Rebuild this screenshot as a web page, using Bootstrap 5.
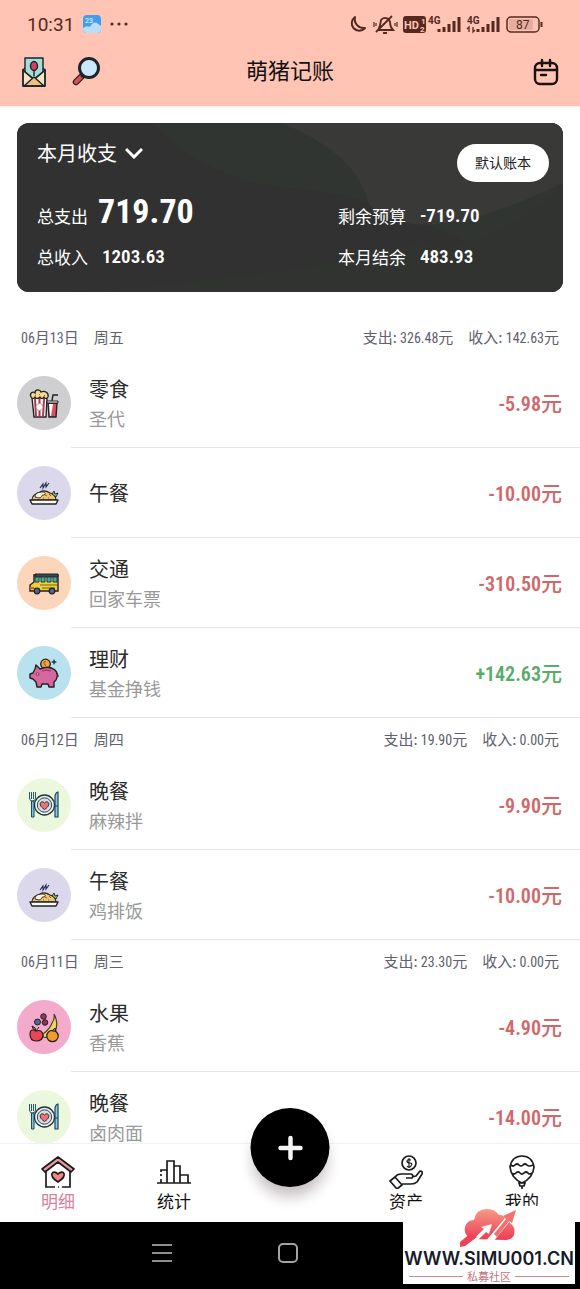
<!DOCTYPE html>
<html lang="zh-CN">
<head>
<meta charset="utf-8">
<meta name="viewport" content="width=device-width, initial-scale=1">
<title>萌猪记账</title>
<link rel="stylesheet" href="https://cdn.jsdelivr.net/npm/bootstrap@5.3.0/dist/css/bootstrap.min.css">
<style>
  body { font-family: "Noto Sans CJK SC", sans-serif; color: #2b2b2b; background: #fff; }
  button, a { color: inherit; }
  .plain-btn { background: none; border: 0; padding: 0; line-height: 1; }
  .num { font-family: "Roboto Condensed", "Noto Sans CJK SC", sans-serif; }
  svg { display: block; flex: none; }

  .top-area { background: #ffc4b3; box-shadow: 0 1px 2px #f3ece9; }
  .status { height: 48px; padding: 0 36px 0 27px; color: #55291f; }
  .status-time { font: 19px Roboto, sans-serif; line-height: 26px; padding-top: 2px; }
  .titlebar { height: 58px; padding: 0 20px; color: #111; }
  .titlebar h1 { font-size: 22px; line-height: 32px; font-weight: 400; padding-bottom: 16px; }
  .titlebar > div { padding-bottom: 10px; }
  .side { flex: 1 1 0; }

  .summary { margin: 17px 17px 24px; padding: 15px 10px 21px 20px; border-radius: 12px; color: #fff; background: #303130; position: relative; overflow: hidden; }
  .summary-bg { position: absolute; inset: 0; width: 100%; height: 100%; }
  .summary-body { position: relative; }
  .period { font-size: 20px; line-height: 30px; }
  .book { width: 92px; height: 38px; margin: 6px 4px 0 0; border: 0; border-radius: 19px; background: #fff; color: #222; font-size: 14px; line-height: 34px; padding-bottom: 3px; }
  .figures { margin-top: 10px; row-gap: 13px; }
  .figure { font-size: 17px; line-height: 28px; gap: 14px; }
  .figure .num { font-weight: 600; font-size: 19px; }
  .figure.total { gap: 10px; }
  .figure.total .num { font-size: 34px; line-height: 38px; font-weight: 700; }

  .day-head { height: 42px; padding: 0 21px; font-size: 15px; color: #60616c; }
  .day-head .num { font-size: 14px; }
  .day-head .gap-day { gap: 15px; }
  .entry { height: 90px; padding-left: 17px; }
  .entry-icon { width: 54px; height: 54px; }
  .entry-body { padding: 0 18px; border-bottom: 1px solid #e6e6e6; }
  .entry-name { font-size: 20px; line-height: 30px; }
  .entry-note { font-size: 18px; line-height: 28px; color: #999; }
  .amount { font-size: 20px; color: #d0686a; font-weight: 600; padding-top: 4px; }
  .amount span { font-size: 21px; font-weight: 500; }
  .amount.income { color: #58ab68; }

  .tabs { background: #fff; border-top: 1px solid #f1f1f1; height: 79px; }
  .tabs a { font-size: 17px; line-height: 24px; color: #111; padding-top: 11px; }
  .tabs a.current { color: #d97f9b; }
  .add { width: 79px; height: 79px; top: -36px; background: #000; border: 0; box-shadow: 0 12px 14px -2px rgba(30,10,20,.25); }
  .sysbar { height: 67px; background: #000; padding: 0 0 5px 26%; gap: 104px; }

  .mark-box { right: 5px; bottom: 5px; width: 172px; height: 78px; background: #fff; }
  .mark-url { font: 600 18px Inter, sans-serif; line-height: 22px; color: #161a2b; }
  .mark-name { font-size: 11px; line-height: 12px; color: #c4727d; gap: 4px; padding: 0 6px; }
  .mark-name i { height: 1px; background: #cf8b92; }
</style>
</head>
<body>
<svg width="0" height="0" class="position-absolute" aria-hidden="true">
  <defs>
    <linearGradient id="cloudFill" x1="0" y1="0" x2="0" y2="1"><stop offset="0" stop-color="#f79a86"/><stop offset="1" stop-color="#ee3b55"/></linearGradient>
    <symbol id="meal" viewBox="0 0 54 54">
      <circle cx="27" cy="27" r="27" fill="#dcd8ec"/>
      <path d="M15 34c0-5 5-7 8-8 3-2 7-1 10 1 4 1 6 4 6 7z" fill="#f1c56c" stroke="#222" stroke-width="1.200"/>
      <path d="M18 31c0-4 4-5 8-5 3 0 3 3 0 3-2 0-1 3-4 3z" fill="#fff3dc" stroke="#222" stroke-width=".9"/>
      <path d="M35 28l2-3 1 3 3-1-2 4z" fill="#7fbf94" stroke="#222" stroke-width=".9"/>
      <path d="M28 29l2 1M32 28l2 2M26 32h1M31 32h1" stroke="#8b5b22"/>
      <path d="M13 34h28l-2 4H15z" fill="#fff" stroke="#222" stroke-width="1.400" stroke-linejoin="round"/>
      <path d="M23 22l3-4v4l3-5v4l3-4" fill="none" stroke="#242a55" stroke-width="1.100"/>
    </symbol>
    <symbol id="dinner" viewBox="0 0 54 54">
      <circle cx="27" cy="27" r="27" fill="#ebf8dd"/>
      <circle cx="27.500" cy="27" r="10" fill="#eef5f5" stroke="#20343e" stroke-width="1.300"/>
      <circle cx="27.500" cy="27" r="7.200" fill="#d5dade" stroke="#20343e" stroke-width=".9"/>
      <path d="M27.500 31.500c-8-5-3-10 0-6.500 3-3.500 8 1.500 0 6.500z" fill="#ec7476" stroke="#222" stroke-width=".9"/>
      <path d="M14.500 23v16h2.500V23z" fill="#7ec2dc" stroke="#20455c"/><path d="M12.500 14v6q0 3 3 3t3-3v-6M14.500 14v7M16.500 14v7" fill="none" stroke="#28576f"/>
      <path d="M38 39V18q1-4 3-4v25z" fill="#8bcce2" stroke="#20455c" stroke-width="1.200"/><path d="M38 28h3" stroke="#20455c"/>
    </symbol>
    <symbol id="snack" viewBox="0 0 54 54">
      <circle cx="27" cy="27" r="27" fill="#cfcfd2"/>
      <path d="M15 22h15l-1 19H17z" fill="#fff" stroke="#222" stroke-width="1.400"/>
      <path d="M18 23l1 18M27 23l-1 18M22.500 23v18" stroke="#a43b50" stroke-width="2"/>
      <circle cx="22.500" cy="31" r="3.500" fill="#fff" stroke="#c46a78" stroke-width=".7"/>
      <path d="M14 21c-2-4 2-6 4-4 0-4 5-4 6-1 4-2 8 1 7 5q-2 3-4 0-2 3-4 0-3 3-5 0-2 3-4 0z" fill="#f6d990" stroke="#222" stroke-width="1.300"/>
      <path d="M18 20l1-1M22 18l1 1M27 19l1 1" stroke="#a66f2c"/>
      <path d="M31 27h9l-1 14h-7z" fill="#d95064" stroke="#222" stroke-width="1.400"/><path d="M32 28h4l-2 12h-1z" fill="#fff"/>
      <path d="M30 25h11v2H30z" fill="#fff" stroke="#222"/><path d="M35 25l1-6h5" fill="none" stroke="#222" stroke-width="1.500"/>
    </symbol>
    <symbol id="bus" viewBox="0 0 54 54">
      <circle cx="27" cy="27" r="27" fill="#fbd6ba"/>
      <path d="M17 19h24v16H13v-6l4-3z" fill="#f1cf38" stroke="#222" stroke-width="1.400"/>
      <path d="M18 18h23v3H18z" fill="#3a4555" stroke="#222"/>
      <path d="M18 21h4v5h-4zM24 21h4v5h-4zM30 21h4v5h-4zM36 21h4v5h-4z" fill="#3bb1ad" stroke="#233c4a"/>
      <path d="M23 29h17M25 32h13" stroke="#73651d"/><path d="M13 32h4" stroke="#d05b24" stroke-width="2"/>
      <circle cx="20" cy="35" r="2.800" fill="#51678c" stroke="#1d2133" stroke-width="1.200"/><circle cx="35" cy="35" r="2.800" fill="#51678c" stroke="#1d2133" stroke-width="1.200"/>
    </symbol>
    <symbol id="pig" viewBox="0 0 54 54">
      <circle cx="27" cy="27" r="27" fill="#b9e1ee"/>
      <circle cx="28.500" cy="18" r="4.800" fill="#f3a540" stroke="#222" stroke-width="1.300"/><path d="M29 15.500q-3 0-2 2t2 2" fill="none" stroke="#8c5010"/>
      <path d="M19 19l4 4q9-4 15 1 4 4 1 10l-2 2v5h-5l-1-3h-6l-1 3h-4l-1-5-3-3-3-1v-4l3-1 2-4z" fill="#d4689f" stroke="#222" stroke-width="1.400" stroke-linejoin="round"/>
      <circle cx="20.500" cy="28" r="1.400" fill="#e996b9" stroke="#7d244c" stroke-width=".8"/><path d="M25 25q5-2 9 0" stroke="#8c2c5c" fill="none"/><path d="M39 27q3 1 2 4" fill="none" stroke="#222"/>
      <path d="M37 13l1 2 2 1-2 1-1 2-1-2-2-1 2-1z" fill="#243f52"/>
    </symbol>
    <symbol id="fruit" viewBox="0 0 54 54">
      <circle cx="27" cy="27" r="27" fill="#f4aacb"/>
      <path d="M37 14q5 9 1 18-5 7-12 5v-3q7-5 9-11 3-4 2-9z" fill="#f6d35c" stroke="#442" stroke-width="1.200"/>
      <path d="M19 31q-6-3-6 3 0 7 6 7 7 0 7-6-1-6-7-4z" fill="#ec4355" stroke="#222" stroke-width="1.200"/><path d="M19 31q0-4-4-5 0 3 4 5l3-4" fill="#5d9b78" stroke="#222"/>
      <circle cx="35.500" cy="36" r="5.700" fill="#f49b2c" stroke="#222" stroke-width="1.200"/><path d="M35 31l3-3 1 3z" fill="#69a064" stroke="#222"/>
      <circle cx="20.500" cy="22" r="3" fill="#4e6a94" stroke="#222"/><circle cx="26.500" cy="16.500" r="2.800" fill="#94395d" stroke="#222"/><circle cx="28" cy="22.500" r="2.800" fill="#8b3458" stroke="#222"/>
    </symbol>
  </defs>
</svg>

<div class="d-flex flex-column vh-100 position-relative overflow-hidden">
  <header class="top-area flex-shrink-0">
    <div class="status d-flex align-items-center justify-content-between">
      <div class="d-flex align-items-center">
        <span class="status-time">10:31</span>
        <svg class="ms-2" width="20" height="20" viewBox="0 0 20 20"><rect x="1" y="1" width="18" height="18" rx="4" fill="#3f9fee"/><path d="M1 14q4-3 7-1 3-6 7-4l4 3v3q0 4-4 4H5q-4 0-4-4z" fill="#b9defa"/><text x="3" y="9" font-size="7" fill="#fff" font-family="Roboto">23</text></svg>
        <svg class="ms-2" width="18" height="6" viewBox="0 0 18 6" fill="currentColor"><circle cx="2" cy="3" r="1.600"/><circle cx="9" cy="3" r="1.600"/><circle cx="16" cy="3" r="1.600"/></svg>
      </div>
      <svg width="198" height="24" viewBox="0 0 198 24" fill="none" stroke="currentColor" font-family="Roboto" font-weight="700">
        <path d="M9 5a7.500 7.500 0 1 0 10 11A9 9 0 0 1 9 5z" stroke-width="2" stroke-linejoin="round"/>
        <path d="M32 18h15q-3-3-3-8a5 5 0 0 0-9-2q-1 7-3 10M37 21h4M46 4L30 20" stroke-width="1.800"/><path d="M28 10v5M51 10v5M30 11v3M49 11v3" stroke-width="1.200"/>
        <rect x="57" y="4" width="23" height="17" rx="3" fill="currentColor" stroke="none"/>
        <g stroke="none" fill="#ffc4b3"><text x="58" y="17" font-size="11">HD</text><text x="75" y="12" font-size="8">1</text><text x="74" y="20" font-size="8">2</text></g>
        <g stroke="none" fill="currentColor" font-size="10"><text x="82" y="12">4G</text><text x="121" y="12">4G</text></g>
        <path d="M93 20v-3M98 20v-5M103 20v-8M108 20v-11M113 20V5M132 20v-3M137 20v-5M142 20v-8M147 20v-11M152 20V5" stroke-width="3"/>
        <path d="M123 20v-5l-2 2M127 15v5l2-2" stroke-width="1.300"/>
        <rect x="161" y="5" width="32" height="15" rx="4" stroke-width="1.500"/><rect x="163" y="7" width="24" height="11" rx="2" fill="#e5ad9e" stroke="none"/><path d="M195.500 10v5" stroke-width="2"/>
        <text x="170" y="17" font-size="12" font-weight="400" stroke="none" fill="currentColor">87</text>
      </svg>
    </div>
    <div class="titlebar d-flex align-items-center">
      <div class="side d-flex gap-4">
        <button class="plain-btn" aria-label="信件"><svg width="28" height="32" viewBox="0 0 28 32" stroke="#15252f" stroke-width="1.400" stroke-linejoin="round"><path d="M3 14l2-2h18l2 2v16H3z" fill="#fae2c1"/><path d="M5 2h18v14l-9 7-9-7z" fill="#a9dbd7"/><path d="M3 14l9 8M25 14l-9 8" fill="none"/><path d="M4 30l10-9 10 9z" fill="#f4bd7b"/><path d="M3 13v17h22V13" fill="none"/><path d="M14 14v6"/><ellipse cx="14" cy="10" rx="3.500" ry="4.500" fill="#d14261"/></svg></button>
        <button class="plain-btn" aria-label="搜索"><svg width="30" height="32" viewBox="0 0 30 32" stroke-linecap="round"><path d="M9 21l-5 5" stroke="#222" stroke-width="6.500"/><path d="M9 21l-5 5" stroke="#d8505d" stroke-width="4"/><path d="M10 20l3-3" stroke="#222" stroke-width="3"/><circle cx="17" cy="12" r="9.500" fill="#cce9fa" stroke="#1d2630" stroke-width="3"/></svg></button>
      </div>
      <h1 class="m-0">萌猪记账</h1>
      <div class="side d-flex justify-content-end">
        <button class="plain-btn" aria-label="日历"><svg width="28" height="28" viewBox="0 0 28 28" fill="none" stroke="#1b1212" stroke-width="2.400" stroke-linecap="round"><rect x="3" y="5" width="22" height="21" rx="5"/><path d="M3 12h22M10 2v6M18 2v6M9 17h5"/></svg></button>
      </div>
    </div>
  </header>

  <main class="flex-fill overflow-hidden" style="min-height:0">
    <section class="summary">
      <svg class="summary-bg" viewBox="0 0 546 169" preserveAspectRatio="none"><rect width="546" height="169" fill="#303130"/><path d="M136 0Q190 60 282 66T546 169V0z" fill="#313532"/><path d="M264 0Q340 30 352 82Q400 130 546 60V0z" fill="#393938"/><path d="M352 82Q400 125 430 124Q500 110 546 60V169H60Q300 150 400 120Q370 105 352 82z" fill="#313331"/></svg>
      <div class="summary-body">
        <div class="d-flex justify-content-between align-items-start">
          <button class="plain-btn period d-flex align-items-center gap-2">本月收支 <svg width="18" height="12" viewBox="0 0 18 12" fill="none" stroke="#fff" stroke-width="3"><path d="M1 2l8 8 8-8"/></svg></button>
          <button class="book">默认账本</button>
        </div>
        <div class="figures row gx-0">
          <div class="col-7 figure total d-flex align-items-end"><span>总支出</span><span class="num">719.70</span></div>
          <div class="col-5 figure d-flex align-items-end"><span>剩余预算</span><span class="num">-719.70</span></div>
          <div class="col-7 figure d-flex align-items-end"><span>总收入</span><span class="num">1203.63</span></div>
          <div class="col-5 figure d-flex align-items-end"><span>本月结余</span><span class="num">483.93</span></div>
        </div>
      </div>
    </section>

    <section>
      <div class="day-head d-flex justify-content-between align-items-center"><div class="d-flex gap-day"><span><span class="num">06</span>月<span class="num">13</span>日</span><span>周五</span></div><div class="d-flex gap-day"><span>支出:<span class="num"> 326.48</span>元</span><span>收入:<span class="num"> 142.63</span>元</span></div></div>
      <div class="entry d-flex align-items-center"><svg class="entry-icon"><use href="#snack"/></svg><div class="entry-body flex-fill h-100 d-flex justify-content-between align-items-center"><div><div class="entry-name">零食</div><div class="entry-note">圣代</div></div><div class="amount num">-5.98<span>元</span></div></div></div>
      <div class="entry d-flex align-items-center"><svg class="entry-icon"><use href="#meal"/></svg><div class="entry-body flex-fill h-100 d-flex justify-content-between align-items-center"><div class="entry-name">午餐</div><div class="amount num">-10.00<span>元</span></div></div></div>
      <div class="entry d-flex align-items-center"><svg class="entry-icon"><use href="#bus"/></svg><div class="entry-body flex-fill h-100 d-flex justify-content-between align-items-center"><div><div class="entry-name">交通</div><div class="entry-note">回家车票</div></div><div class="amount num">-310.50<span>元</span></div></div></div>
      <div class="entry d-flex align-items-center"><svg class="entry-icon"><use href="#pig"/></svg><div class="entry-body flex-fill h-100 d-flex justify-content-between align-items-center"><div><div class="entry-name">理财</div><div class="entry-note">基金挣钱</div></div><div class="amount income num">+142.63<span>元</span></div></div></div>
    </section>
    <section>
      <div class="day-head d-flex justify-content-between align-items-center"><div class="d-flex gap-day"><span><span class="num">06</span>月<span class="num">12</span>日</span><span>周四</span></div><div class="d-flex gap-day"><span>支出:<span class="num"> 19.90</span>元</span><span>收入:<span class="num"> 0.00</span>元</span></div></div>
      <div class="entry d-flex align-items-center"><svg class="entry-icon"><use href="#dinner"/></svg><div class="entry-body flex-fill h-100 d-flex justify-content-between align-items-center"><div><div class="entry-name">晚餐</div><div class="entry-note">麻辣拌</div></div><div class="amount num">-9.90<span>元</span></div></div></div>
      <div class="entry d-flex align-items-center"><svg class="entry-icon"><use href="#meal"/></svg><div class="entry-body flex-fill h-100 d-flex justify-content-between align-items-center"><div><div class="entry-name">午餐</div><div class="entry-note">鸡排饭</div></div><div class="amount num">-10.00<span>元</span></div></div></div>
    </section>
    <section>
      <div class="day-head d-flex justify-content-between align-items-center"><div class="d-flex gap-day"><span><span class="num">06</span>月<span class="num">11</span>日</span><span>周三</span></div><div class="d-flex gap-day"><span>支出:<span class="num"> 23.30</span>元</span><span>收入:<span class="num"> 0.00</span>元</span></div></div>
      <div class="entry d-flex align-items-center"><svg class="entry-icon"><use href="#fruit"/></svg><div class="entry-body flex-fill h-100 d-flex justify-content-between align-items-center"><div><div class="entry-name">水果</div><div class="entry-note">香蕉</div></div><div class="amount num">-4.90<span>元</span></div></div></div>
      <div class="entry d-flex align-items-center"><svg class="entry-icon"><use href="#dinner"/></svg><div class="entry-body flex-fill h-100 d-flex justify-content-between align-items-center"><div><div class="entry-name">晚餐</div><div class="entry-note">卤肉面</div></div><div class="amount num">-14.00<span>元</span></div></div></div>
    </section>
  </main>

  <nav class="tabs row g-0 flex-shrink-0 position-relative text-center">
    <a href="#" class="col current text-decoration-none"><svg class="mx-auto" width="34" height="34" viewBox="0 0 34 34" fill="none" stroke="#1b1b1b" stroke-width="1.700"><path d="M5 15v17h9M17 32h1M21 32h8V15" fill="none"/><path d="M17 2l16 12-3 3L17 7 4 17l-3-3z" fill="#ea9aa2" stroke-linejoin="round"/><path d="M17 27c-11-7-5-13 0-8 5-5 11 1 0 8z" fill="#f48488"/></svg>明细</a>
    <a href="#" class="col text-decoration-none"><svg class="mx-auto" width="34" height="34" viewBox="0 0 34 34" fill="none" stroke="#1b1b1b" stroke-width="1.700"><path d="M0 28h34M10 28V6h7v22M17 11h6v17M23 20h8v8M10 15H4v2M4 19v2M4 24v4"/></svg>统计</a>
    <div class="col"></div>
    <a href="#" class="col text-decoration-none"><svg class="mx-auto" width="34" height="34" viewBox="0 0 34 34" fill="none" stroke="#1b1b1b" stroke-width="1.700" stroke-linejoin="round"><circle cx="20" cy="8" r="7"/><path d="M22 5q-4-1-4 1t3 2 1 3-4 0M20 3v10" stroke-width="1.200"/><path d="M1 26l5-4 7 8-5 4zM6 22q2-3 6-3h10q3 1 1 4h-6M23 22l4-1 4-5q3 0 2 3l-5 8q-2 2-6 2h-9"/></svg>资产</a>
    <a href="#" class="col text-decoration-none"><svg class="mx-auto" width="34" height="34" viewBox="0 0 34 34" fill="none" stroke="#1b1b1b" stroke-width="1.700"><path d="M17 28Q6 23 5 12 7 1 17 1t12 11q-1 11-12 16zM6 10q2 2 4 0 2-2 4 0 2 2 4 0 2-2 4 0 2 2 6 0M7 18q2 2 4 0 2-2 4 0 2 2 4 0 2-2 4 0 1 2 4 0M14 28h6l-1 3h-4zM17 31v3"/></svg>我的</a>
    <button class="add rounded-circle position-absolute start-50 translate-middle-x p-0" aria-label="记一笔"><svg class="mx-auto" width="26" height="26" viewBox="0 0 26 26" stroke="#f4f3f5" stroke-width="4.500" stroke-linecap="round"><path d="M13 3v20M3 13h20"/></svg></button>
  </nav>

  <div class="sysbar d-flex align-items-center flex-shrink-0">
    <button class="plain-btn" aria-label="最近任务"><svg width="22" height="20" viewBox="0 0 22 20" stroke="#8f8f8f" stroke-width="2"><path d="M1 2h20M1 10h20M1 18h20"/></svg></button>
    <button class="plain-btn" aria-label="主屏幕"><svg width="22" height="22" viewBox="0 0 22 22" fill="none" stroke="#a2a2a2" stroke-width="2"><rect x="2" y="2" width="18" height="18" rx="4"/></svg></button>
  </div>

  <div class="mark-box position-absolute d-flex flex-column align-items-center">
    <svg width="60" height="42" viewBox="0 0 60 42"><path d="M14 33Q4 30 6 21 8 14 15 14 17 3 28 3q8 0 12 6 10-1 11 8 6 4 4 12-2 5-9 5z" fill="url(#cloudFill)"/><path d="M9 38L25 23l-3-2 11-3-3 10-3-2L16 37z" fill="#fff"/><path d="M1 41v-5L12 27l6 4L6 40z" fill="#ef4259"/><path d="M26 36L46 12l-3-3 15-6-4 15-3-3L34 36z" fill="#fff"/><path d="M35 28L47 13l-3-3 13-6-4 13-3-2L38 31z" fill="#f2706f"/></svg>
    <div class="mark-url text-nowrap">WWW.SIMU001.CN</div>
    <div class="mark-name d-flex align-items-center w-100"><i class="flex-fill"></i>私募社区<i class="flex-fill"></i></div>
  </div>
</div>
<script src="https://cdn.jsdelivr.net/npm/bootstrap@5.3.0/dist/js/bootstrap.bundle.min.js"></script>
</body>
</html>
